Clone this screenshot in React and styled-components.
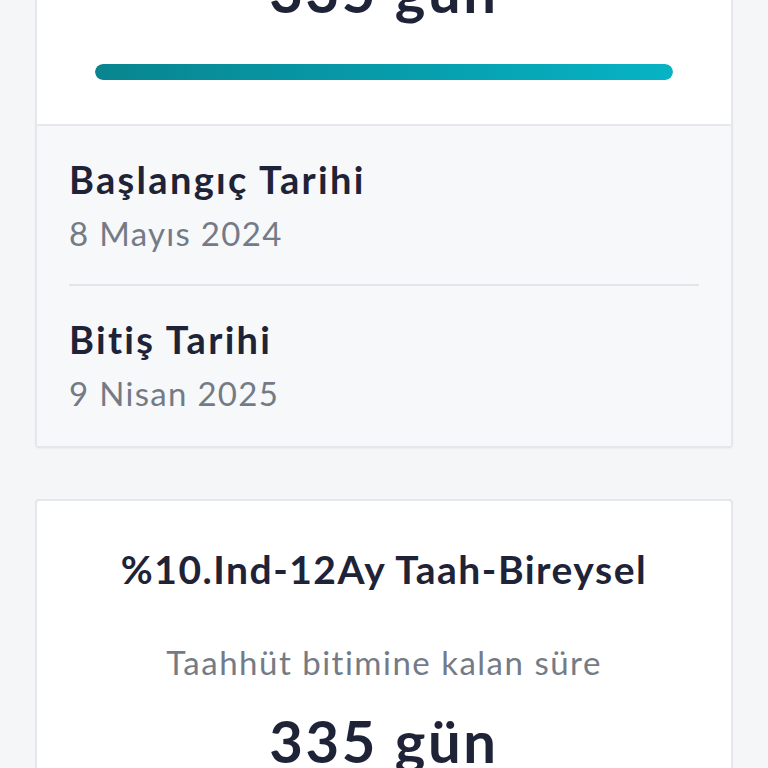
import React from 'react'
import styled, { createGlobalStyle } from 'styled-components'

const Global = createGlobalStyle`
  html, body {
    margin: 0;
    padding: 0;
    background: #f5f6f8;
    font-family: Lato, "Noto Sans", sans-serif;
    overflow: hidden;
  }
`

// the view is scrolled: the first card starts above the top edge
const Page = styled.div`
  display: flex;
  flex-direction: column;
  gap: 51px;
  padding: 0 35px;
  margin-top: -251px;
`

const Card = styled.section`
  background: #ffffff;
  border: 2px solid #e5e7eb;
  border-radius: 4px;
  box-shadow: 0 1px 2px rgba(0, 0, 0, 0.04);
  overflow: hidden;
`

const Summary = styled.div`
  display: flex;
  flex-direction: column;
  align-items: center;
  padding: 46px 58px 44px;
`

const PlanName = styled.h2`
  margin: 0;
  font-size: 39px;
  line-height: 44px;
  font-weight: 700;
  color: #1f2337;
  letter-spacing: 1.5px;
`

const Caption = styled.p`
  margin: 51px 0 0;
  font-size: 33px;
  line-height: 40px;
  font-weight: 400;
  color: #747b86;
  letter-spacing: 1.5px;
`

const Remaining = styled.div`
  margin-top: 28px;
  font-size: 58px;
  line-height: 62px;
  font-weight: 700;
  color: #1f2337;
  letter-spacing: 2.6px;
`

const Track = styled.div`
  width: 100%;
  height: 16px;
  margin-top: 42px;
  border-radius: 8px;
  background: #e8ecef;
  overflow: hidden;
`

const Fill = styled.div`
  height: 100%;
  border-radius: 8px;
  background: linear-gradient(90deg, #08858f 0%, #0799a8 45%, #06b3c4 100%);
`

const Dates = styled.div`
  display: flex;
  flex-direction: column;
  padding: 0 32px;
  background: #f7f8fa;
  border-top: 2px solid #e6e8eb;
`

const DateRow = styled.div`
  display: flex;
  flex-direction: column;
  gap: 14px;
  padding: ${(p) => (p.$last ? '32px 0 34px' : '32px 0')};
  border-bottom: ${(p) => (p.$last ? 'none' : '2px solid #e3e5e8')};
`

const Label = styled.div`
  font-size: 38px;
  line-height: 42px;
  font-weight: 700;
  color: #1f2337;
  letter-spacing: 2.3px;
`

const Value = styled.div`
  font-size: 33px;
  line-height: 38px;
  color: #747b86;
  letter-spacing: 1.3px;
`

const plans = [
  {
    name: '%10.Ind-12Ay Taah-Bireysel',
    days: 335,
    progress: 100,
    start: '8 Mayıs 2024',
    end: '9 Nisan 2025',
  },
  {
    name: '%10.Ind-12Ay Taah-Bireysel',
    days: 335,
    progress: 100,
    start: '8 Mayıs 2024',
    end: '9 Nisan 2025',
  },
]

function PlanCard({ plan }) {
  return (
    <Card>
      <Summary>
        <PlanName>{plan.name}</PlanName>
        <Caption>Taahhüt bitimine kalan süre</Caption>
        <Remaining>{plan.days} gün</Remaining>
        <Track>
          <Fill style={{ width: `${plan.progress}%` }} />
        </Track>
      </Summary>
      <Dates>
        <DateRow>
          <Label>Başlangıç Tarihi</Label>
          <Value>{plan.start}</Value>
        </DateRow>
        <DateRow $last>
          <Label>Bitiş Tarihi</Label>
          <Value>{plan.end}</Value>
        </DateRow>
      </Dates>
    </Card>
  )
}

export default function App() {
  return (
    <>
      <Global />
      <Page>
        {plans.map((plan, i) => (
          <PlanCard key={i} plan={plan} />
        ))}
      </Page>
    </>
  )
}
